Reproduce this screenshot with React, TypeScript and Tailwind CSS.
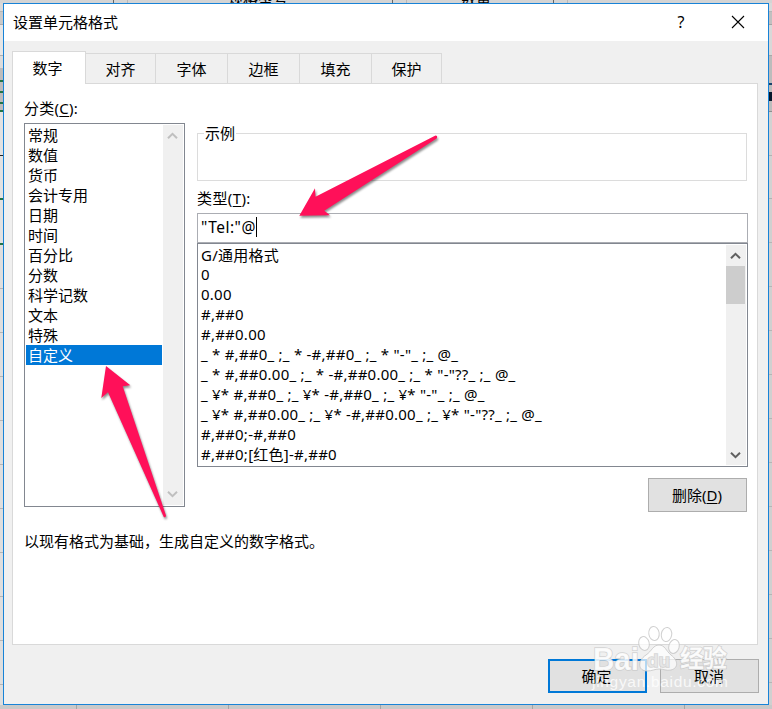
import React from "react";

const categories = ["常规", "数值", "货币", "会计专用", "日期", "时间", "百分比", "分数", "科学记数", "文本", "特殊", "自定义"];

const formats = [
  "G/通用格式",
  "0",
  "0.00",
  "#,##0",
  "#,##0.00",
  '_ * #,##0_ ;_ * -#,##0_ ;_ * "-"_ ;_ @_ ',
  '_ * #,##0.00_ ;_ * -#,##0.00_ ;_ * "-"??_ ;_ @_ ',
  '_ ¥* #,##0_ ;_ ¥* -#,##0_ ;_ ¥* "-"_ ;_ @_ ',
  '_ ¥* #,##0.00_ ;_ ¥* -#,##0.00_ ;_ ¥* "-"??_ ;_ @_ ',
  "#,##0;-#,##0",
  "#,##0;[红色]-#,##0",
];

const tabs = [
  { label: "对齐", width: "w-[70px]" },
  { label: "字体", width: "w-[72px]" },
  { label: "边框", width: "w-[72px]" },
  { label: "填充", width: "w-[72px]" },
  { label: "保护", width: "w-[70px]" },
];

/* Sheet edges on both sides of the dialog: [height, colour] runs from top to bottom. */
const leftEdge: [number, string][] = [
  [8, "#d9d9d9"], [1, "#b5b5b5"], [12, "#c9c9c9"], [1, "#ababab"], [30, "#e6e6e6"], [1, "#b0b0b0"], [12, "#dcdcdc"],
  [12, "#bcbcbc"], [2, "#217346"], [9, "#bcbcbc"], [2, "#217346"], [9, "#bcbcbc"], [2, "#217346"], [6, "#bcbcbc"], [2, "#217346"],
  [43, "#e2e2e2"], [1, "#222222"], [42, "#e2e2e2"], [2, "#217346"], [43, "#e2e2e2"], [2, "#217346"],
];
const rightEdge: [number, string][] = [
  [8, "#d9d9d9"], [1, "#b5b5b5"], [12, "#c0c0c0"], [1, "#a3a3a3"], [30, "#d8d8d8"], [1, "#a8a8a8"], [27, "#bcbcbc"], [2, "#17426b"],
  [7, "#bcbcbc"], [9, "#06182c"], [10, "#bcbcbc"], [1, "#8e8e8e"], [43, "#d2d2d2"], [1, "#b2b2b2"], [42, "#d2d2d2"], [1, "#b2b2b2"],
];

function Edge({ runs, fill }: { runs: [number, string][]; fill: string }) {
  const rows = fill === "left" ? 10 : 11;
  return (
    <div className={`flex w-[3px] flex-col overflow-hidden ${fill === "left" ? "bg-[#dedede]" : "bg-[#d0d0d0]"}`}>
      {runs.map(([h, c], i) => (
        <div key={i} className="shrink-0" style={{ height: h, background: c }} />
      ))}
      {Array.from({ length: rows }, (_, i) => (
        <div key={`r${i}`} className="h-[44px] shrink-0 border-b border-[#b5b5b5]" />
      ))}
    </div>
  );
}

function Chevron({ up, color }: { up?: boolean; color: string }) {
  return (
    <svg width="11" height="8" viewBox="0 0 11 8" fill="none" stroke={color} strokeWidth="2">
      <path d={up ? "M1 6.3 5.5 1.8 10 6.3" : "M1 1.7 5.5 6.2 10 1.7"} />
    </svg>
  );
}

export default function App() {
  return (
    <div className="relative flex h-[709px] w-[772px] flex-col overflow-hidden bg-[#cfcfcf] font-['Noto_Sans','Noto_Sans_CJK_SC',sans-serif] text-[15px] leading-[18px] text-black">
      <div className="flex h-[3px] shrink-0 overflow-hidden bg-[#d4d4d4] text-[15px]">
        <div className="h-full w-[113px]" />
        <div className="h-full w-[15px] border-x border-l-[#666] border-r-[#b8b8b8]" />
        <div className="h-full w-[100px]" />
        <div className="flex h-full w-[164px] items-end leading-[6px]"><span className="h-[7px]">规格型号</span></div>
        <div className="h-full w-[15px] border-x border-l-[#666] border-r-[#b8b8b8]" />
        <div className="h-full w-[54px]" />
        <div className="flex h-full w-[92px] items-end leading-[6px]"><span className="h-[7px]">数量</span></div>
        <div className="h-full w-[15px] border-x border-l-[#666] border-r-[#b8b8b8]" />
      </div>

      <div className="flex h-[702px] shrink-0">
        <Edge runs={leftEdge} fill="left" />
        <main className="flex w-[766px] shrink-0 flex-col border border-[#1883d7] bg-[#f0f0f0]">
          <header className="flex h-[37px] shrink-0 items-center bg-white pb-[2px] pl-[9px]">
            <h1 className="grow">设置单元格格式</h1>
            <span className="w-[12px] text-center text-[16px]">?</span>
            <svg className="mr-[23px] ml-[44px]" width="14" height="14" viewBox="0 0 14 14" stroke="black" strokeWidth="1.1">
              <path d="M1 1 13 13M13 1 1 13" />
            </svg>
          </header>

          <nav className="z-10 mt-[10px] ml-[8px] flex h-[33px] shrink-0 items-end">
            <div className="flex h-[33px] w-[74px] items-center justify-center border border-b-0 border-[#d9d9d9] bg-white pb-px">
              <span className="pr-[3px]">数字</span>
            </div>
            {tabs.map((t) => (
              <div key={t.label} className={`flex h-[31px] items-center justify-center border-t border-r border-b border-[#d9d9d9] ${t.width}`}>
                {t.label}
              </div>
            ))}
          </nav>

          <section className="-mt-px ml-[8px] flex h-[562px] w-[746px] shrink-0 flex-col border border-[#d9d9d9] bg-white pl-[11px]">
            <div className="flex h-[423px] gap-[12px]">
              <div className="flex w-[161px] flex-col">
                <div className="mt-[15px] h-[24px] tracking-[0.25px]">分类(<u className="underline underline-offset-2">C</u>):</div>
                <div className="flex h-[384px] justify-between border border-[#828790] p-px">
                  <ul className="w-[136px] leading-5">
                    {categories.map((c) => (
                      <li key={c} className={`h-5 pl-[2px] ${c === "自定义" ? "bg-[#0078d7] text-white" : ""}`}>{c}</li>
                    ))}
                  </ul>
                  <div className="flex w-[20px] flex-col items-center justify-between bg-[#f0f0f0] py-[7px] pr-[2px]">
                    <Chevron up color="#bfbfbf" />
                    <Chevron color="#bfbfbf" />
                  </div>
                </div>
              </div>

              <div className="flex w-[551px] flex-col">
                <fieldset className="mt-[39px] h-[58px] w-[550px] border border-[#dcdcdc] pl-[6px]">
                  <legend className="h-5 px-px leading-5">示例</legend>
                </fieldset>
                <div className="mt-[8px] h-[24px] tracking-[0.4px]">类型(<u className="underline underline-offset-2">T</u>):</div>
                <div className="flex h-[30px] shrink-0 items-center border border-[#abadb3] pb-[3px] pl-[3px]">
                  <span className="text-[15.5px] tracking-[0.5px]">"Tel:"@</span>
                  <span className="h-[20px] w-px bg-black" />
                </div>
                <div className="flex h-[224px] shrink-0 justify-between border border-[#828790] p-px">
                  <ul className="pl-[2px] tracking-[0.24px]">
                    {formats.map((f) => (
                      <li key={f} className={`h-5 whitespace-pre ${f.startsWith("G") ? "leading-5" : ""}`}>{f}</li>
                    ))}
                  </ul>
                  <div className="flex w-[20px] flex-col bg-[#f0f0f0]">
                    <div className="flex h-[21px] w-[19px] shrink-0 items-center justify-center"><Chevron up color="#606060" /></div>
                    <div className="h-[38px] w-[19px] shrink-0 bg-[#cdcdcd]" />
                    <div className="grow" />
                    <div className="flex h-[21px] w-[19px] shrink-0 items-center justify-center"><Chevron color="#606060" /></div>
                  </div>
                </div>
              </div>
            </div>
            <div className="flex">
              <p className="mt-[25px] w-[624px]">以现有格式为基础，生成自定义的数字格式。</p>
              <button className="-mt-[29px] h-[34px] w-[99px] border border-[#adadad] bg-[#e1e1e1] pr-px pb-px">删除(<u className="underline underline-offset-2">D</u>)</button>
            </div>
          </section>

          <footer className="mt-[14px] flex justify-end gap-[13px] pr-[9px]">
            <button className="h-[34px] w-[99px] border-2 border-[#0078d7] bg-[#e1e1e1] pr-[2px]">确定</button>
            <button className="h-[34px] w-[99px] border border-[#adadad] bg-[#e1e1e1] pr-px">取消</button>
          </footer>
        </main>
        <Edge runs={rightEdge} fill="right" />
      </div>

      <div className="flex h-[4px] shrink-0 bg-[#c9c9c9]">
        <div className="w-[77px] border-r border-[#a5a5a5]" />
        <div className="w-[152px] border-r border-[#a5a5a5]" />
        <div className="w-[152px] border-r border-[#a5a5a5]" />
        <div className="w-[152px] border-r border-[#a5a5a5]" />
        <div className="w-[152px] border-r border-[#a5a5a5]" />
      </div>

      <svg className="pointer-events-none absolute inset-0 z-20 drop-shadow-[1px_2px_1px_rgba(0,0,0,0.45)]" width="772" height="709" fill="#ff1059">
        <path d="M435.5 135.4Q438 135.5 436.7 138.6L324.3 210.7 330 215.3 299.3 215.7 315 188.3 315.5 196.7Z" />
        <path d="M106 366 130.3 385.3 122.7 386.3 166 515.5Q166 517.8 163.8 517L108 392.3 101.3 398Z" />
      </svg>

      <svg className="pointer-events-none absolute top-[620px] left-[585px] z-20" width="150" height="80">
        <g fill="white" fillOpacity="0.7" stroke="#c4c4c4" strokeOpacity="0.8" strokeWidth="1">
          <ellipse cx="69" cy="13.500" rx="5.2" ry="7" transform="rotate(-8 69 13.5)" />
          <ellipse cx="81.500" cy="14.500" rx="5.2" ry="7" transform="rotate(10 81.5 14.5)" />
          <ellipse cx="59" cy="23.500" rx="5.2" ry="7" transform="rotate(-14 59 23.5)" />
          <ellipse cx="89" cy="26.500" rx="5.2" ry="7" transform="rotate(16 89 26.5)" />
          <path d="M74 25C68 25 67 31 61 35 52 41 53 51 62 51 67 51 70 49 74 49 79 49 81 51 86 50 94 48 93 40 86 35 81 31 80 25 74 25Z" />
        </g>
        <g fill="white" fillOpacity="0.85" stroke="#c4c4c4" strokeOpacity="0.7" strokeWidth="1.5" fontWeight="700">
          <text className="[paint-order:stroke]" x="8" y="50" fontFamily="Liberation Sans" fontSize="31" textLength="46" lengthAdjust="spacingAndGlyphs">Bai</text>
          <text className="[paint-order:stroke]" x="62" y="47" fontFamily="Liberation Sans" fontSize="19" fill="#e6e6e6">du</text>
          <text className="[paint-order:stroke]" x="95" y="47" fontFamily="Noto Sans CJK SC" fontSize="24" textLength="47">经验</text>
        </g>
        <text x="7" y="67" fill="white" fillOpacity="0.8" fontFamily="Liberation Sans" fontSize="15.500" textLength="136">jingyan.baidu.com</text>
      </svg>
    </div>
  );
}
